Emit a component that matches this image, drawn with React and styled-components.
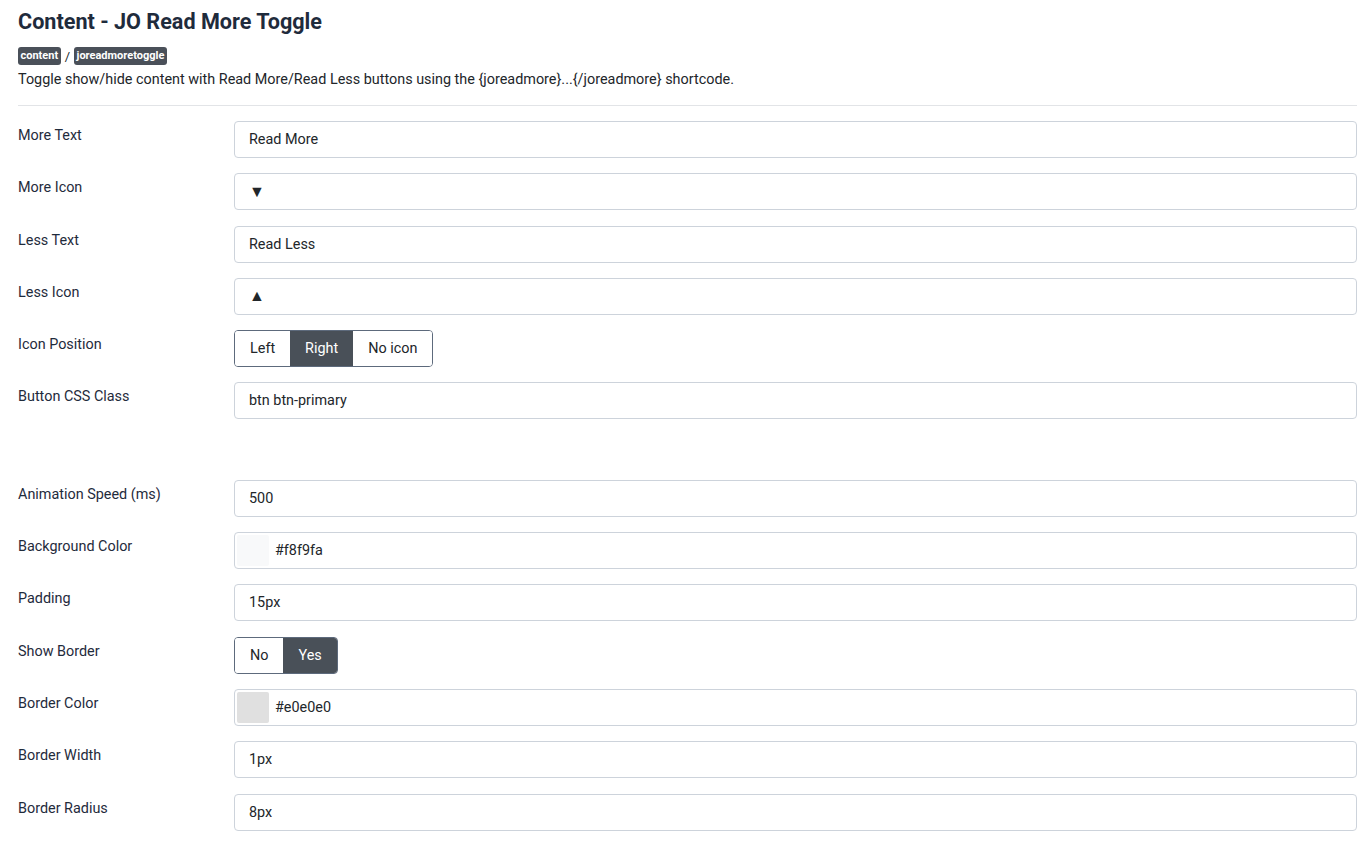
import React from 'react';
import styled, { createGlobalStyle } from 'styled-components';

const GlobalStyle = createGlobalStyle`
  body {
    margin: 0;
    background: #fff;
    font-family: Roboto, "Liberation Sans", Arial, sans-serif;
    color: #22262a;
  }
`;

const Page = styled.div`
  padding: 8px 15px 20px 18px;
`;

const Title = styled.h1`
  margin: 0;
  font-size: 21.6px;
  font-weight: 700;
  line-height: 28px;
  color: #1f2b3c;
`;

const Crumbs = styled.div`
  display: flex;
  align-items: center;
  gap: 4px;
  margin-top: 11px;
  font-size: 13px;
  color: #22262a;
`;

const Badge = styled.span`
  display: inline-block;
  background: #4a5059;
  color: #fff;
  font-size: 11px;
  font-weight: 700;
  line-height: 18px;
  padding: 0 2.5px;
  border-radius: 3px;
`;

const Description = styled.p`
  margin: 4px 0 0;
  font-size: 14.4px;
  line-height: 21px;
  color: #22262a;
`;

const Rule = styled.hr`
  border: 0;
  border-top: 1px solid #e2e4e7;
  margin: 15px 0 15px;
`;

const Row = styled.div`
  display: grid;
  grid-template-columns: 216px 1fr;
  margin-bottom: 15.3px;
`;

const Spacer = styled.div`
  height: 45px;
`;

const Label = styled.label`
  font-size: 14.4px;
  line-height: 20px;
  padding-top: 5px;
  color: #1f2b3c;
`;

const Field = styled.div`
  display: flex;
  align-items: center;
  height: 37px;
  box-sizing: border-box;
  border: 1px solid #cdd3db;
  border-radius: 4px;
  padding: ${p => (p.$swatch ? '0 0 0 2px' : '0 14px')};
  font-size: 14.4px;
  color: #22262a;
  background: #fff;
`;

const Swatch = styled.span`
  width: 32px;
  height: 31px;
  margin-right: 6px;
  background: ${p => p.$color};
  border-radius: 2px;
`;

const Glyph = styled.span`
  font-size: 16px;
  line-height: 1;
`;

const Group = styled.div`
  display: inline-flex;
  height: 37px;
  box-sizing: border-box;
  border: 1px solid #5d6a7c;
  border-radius: 4px;
  overflow: hidden;
  justify-self: start;
`;

const GroupButton = styled.span`
  display: flex;
  align-items: center;
  padding: 0 15px;
  font-size: 14.4px;
  background: ${p => (p.$active ? '#495058' : '#fff')};
  color: ${p => (p.$active ? '#fff' : '#22262a')};
`;

const TextRow = ({ label, value }) => (
  <Row>
    <Label>{label}</Label>
    <Field>{value}</Field>
  </Row>
);

const ColorRow = ({ label, value }) => (
  <Row>
    <Label>{label}</Label>
    <Field $swatch>
      <Swatch $color={value} />
      {value}
    </Field>
  </Row>
);

const ToggleRow = ({ label, options, active }) => (
  <Row>
    <Label>{label}</Label>
    <Group>
      {options.map(o => (
        <GroupButton key={o} $active={o === active}>{o}</GroupButton>
      ))}
    </Group>
  </Row>
);

export default function App() {
  return (
    <Page>
      <GlobalStyle />
      <Title>Content - JO Read More Toggle</Title>
      <Crumbs>
        <Badge>content</Badge>/<Badge>joreadmoretoggle</Badge>
      </Crumbs>
      <Description>
        Toggle show/hide content with Read More/Read Less buttons using the {'{joreadmore}...{/joreadmore}'} shortcode.
      </Description>
      <Rule />

      <TextRow label="More Text" value="Read More" />
      <TextRow label="More Icon" value={<Glyph>▼</Glyph>} />
      <TextRow label="Less Text" value="Read Less" />
      <TextRow label="Less Icon" value={<Glyph>▲</Glyph>} />
      <ToggleRow label="Icon Position" options={['Left', 'Right', 'No icon']} active="Right" />
      <TextRow label="Button CSS Class" value="btn btn-primary" />
      <Spacer />
      <TextRow label="Animation Speed (ms)" value="500" />
      <ColorRow label="Background Color" value="#f8f9fa" />
      <TextRow label="Padding" value="15px" />
      <ToggleRow label="Show Border" options={['No', 'Yes']} active="Yes" />
      <ColorRow label="Border Color" value="#e0e0e0" />
      <TextRow label="Border Width" value="1px" />
      <TextRow label="Border Radius" value="8px" />
    </Page>
  );
}
